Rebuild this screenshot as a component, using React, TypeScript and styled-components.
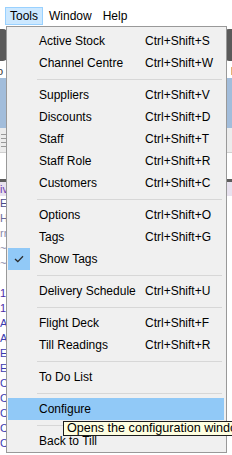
import styled, { createGlobalStyle } from 'styled-components';

const GlobalStyle = createGlobalStyle`
  html, body {
    margin: 0;
    padding: 0;
    background: #ffffff;
  }
  body {
    font-family: 'Liberation Sans', Arial, sans-serif;
    font-size: 12px;
    color: #000000;
  }
`;

const Screen = styled.div`
  position: relative;
  width: 232px;
  height: 455px;
  overflow: hidden;
  background: #ffffff;
  display: flex;
  flex-direction: column;
`;

const MenuBar = styled.div`
  height: 26px;
  flex: none;
  display: flex;
  align-items: flex-end;
  padding: 0 0 1px 5px;
  box-sizing: border-box;
  background: #ffffff;
`;

const BarItem = styled.div<{ $open?: boolean }>`
  height: 18px;
  padding: 0 4px;
  display: flex;
  align-items: center;
  box-sizing: border-box;
  border: 1px solid ${(p) => (p.$open ? '#99d1ff' : 'transparent')};
  background: ${(p) => (p.$open ? '#cce8ff' : 'transparent')};
  margin-right: 1px;
`;

const Toolbar = styled.div`
  height: 52px;
  flex: none;
  display: flex;
  justify-content: space-between;
  padding: 3px 0 0 0;
  box-sizing: border-box;
  margin: 0 -30px;
  background: #ffffff;
`;

const ToolButton = styled.div`
  width: 40px;
  display: flex;
  flex-direction: column;
  align-items: center;
  gap: 4px;
  font-size: 11px;
  color: #333;

  .face {
    width: 36px;
    height: 32px;
    border-radius: 5px;
    background: #5a5a5a;
  }
`;

const BlueBand = styled.div`
  height: 50px;
  flex: none;
  background: #a2bddb;
`;

const GreyBand = styled.div`
  height: 24px;
  flex: none;
  background: #ececec;
  border-bottom: 1px solid #d0d0d0;
  display: flex;
  flex-direction: column;
  justify-content: center;
  gap: 3px;
  padding-left: 1px;

  span {
    width: 5px;
    height: 1px;
    background: #9a9a9a;
  }
`;

const WhiteGap = styled.div`
  height: 26px;
  flex: none;
  background: #ffffff;
`;

const DarkRule = styled.div`
  height: 3px;
  flex: none;
  background: #5c5c5c;
`;

const ListHeader = styled.div`
  height: 14px;
  flex: none;
  background: #e8e2ef;
  color: #6a3ab0;
  font-size: 11px;
  line-height: 14px;
`;

const ListRow = styled.div<{ $tone: string }>`
  height: 15px;
  flex: none;
  font-size: 11px;
  line-height: 15px;
  color: ${(p) => p.$tone};
  white-space: nowrap;
`;

const Dropdown = styled.div`
  position: absolute;
  left: 6px;
  top: 26px;
  width: 221px;
  box-sizing: border-box;
  background: #f0f0f0;
  border: 1px solid #999999;
  padding: 3px 2px 0 1px;
  display: flex;
  flex-direction: column;
`;

const Item = styled.div<{ $hot?: boolean }>`
  height: 22px;
  display: grid;
  grid-template-columns: 22px 9px 106px 1fr;
  align-items: center;
  background: ${(p) => (p.$hot ? '#91c9f7' : 'transparent')};
  color: #000;
  white-space: nowrap;
`;

const CheckBox = styled.div<{ $on?: boolean }>`
  width: 22px;
  height: 22px;
  display: flex;
  align-items: center;
  justify-content: center;
  background: ${(p) => (p.$on ? '#91c9f7' : 'transparent')};
`;

const Label = styled.span`
  grid-column: 3;
`;

const Shortcut = styled.span`
  grid-column: 4;
`;

const Separator = styled.div`
  height: 10px;
  display: flex;
  align-items: center;
  padding: 0 2px 0 29px;

  &::after {
    content: '';
    flex: 1;
    height: 1px;
    background: #d7d7d7;
  }
`;

const Tooltip = styled.div`
  position: absolute;
  left: 63px;
  top: 421px;
  height: 15px;
  box-sizing: border-box;
  border: 1px solid #1e1e1e;
  background: #ffffe1;
  padding: 0 3px;
  font-size: 12.6px;
  line-height: 13px;
  white-space: nowrap;
  color: #000;
`;

type Entry =
  | { kind: 'item'; label: string; keys?: string; checked?: boolean; hot?: boolean }
  | { kind: 'sep' };

const entries: Entry[] = [
  { kind: 'item', label: 'Active Stock', keys: 'Ctrl+Shift+S' },
  { kind: 'item', label: 'Channel Centre', keys: 'Ctrl+Shift+W' },
  { kind: 'sep' },
  { kind: 'item', label: 'Suppliers', keys: 'Ctrl+Shift+V' },
  { kind: 'item', label: 'Discounts', keys: 'Ctrl+Shift+D' },
  { kind: 'item', label: 'Staff', keys: 'Ctrl+Shift+T' },
  { kind: 'item', label: 'Staff Role', keys: 'Ctrl+Shift+R' },
  { kind: 'item', label: 'Customers', keys: 'Ctrl+Shift+C' },
  { kind: 'sep' },
  { kind: 'item', label: 'Options', keys: 'Ctrl+Shift+O' },
  { kind: 'item', label: 'Tags', keys: 'Ctrl+Shift+G' },
  { kind: 'item', label: 'Show Tags', checked: true },
  { kind: 'sep' },
  { kind: 'item', label: 'Delivery Schedule', keys: 'Ctrl+Shift+U' },
  { kind: 'sep' },
  { kind: 'item', label: 'Flight Deck', keys: 'Ctrl+Shift+F' },
  { kind: 'item', label: 'Till Readings', keys: 'Ctrl+Shift+R' },
  { kind: 'sep' },
  { kind: 'item', label: 'To Do List' },
  { kind: 'sep' },
  { kind: 'item', label: 'Configure', hot: true },
  { kind: 'sep' },
  { kind: 'item', label: 'Back to Till' },
];

const rows: [string, string][] = [
  ['Ed', '#4a4a8a'],
  ['Hm', '#6a6a9a'],
  ['rn', '#8a8aa8'],
  ['~a', '#8a8aa8'],
  ['~b', '#8a8aa8'],
  ['  ', '#ffffff'],
  ['1a', '#4b2aa8'],
  ['1b', '#4b2aa8'],
  ['Aa', '#3b3bb0'],
  ['Ab', '#3b3bb0'],
  ['Ea', '#3b3bb0'],
  ['Eb', '#3b3bb0'],
  ['Ca', '#3b3bb0'],
  ['Cb', '#3b3bb0'],
  ['Cc', '#3b3bb0'],
  ['Cd', '#3b3bb0'],
  ['Ce', '#3b3bb0'],
];

function CheckIcon() {
  return (
    <svg width='10' height='8' viewBox='0 0 10 8'>
      <path d='M1 4 L3.8 6.6 L9 1.2' fill='none' stroke='#2b2b2b' strokeWidth='1.3' />
    </svg>
  );
}

function App() {
  return (
    <>
      <GlobalStyle />
      <Screen>
        <MenuBar>
          <BarItem $open>Tools</BarItem>
          <BarItem>Window</BarItem>
          <BarItem>Help</BarItem>
        </MenuBar>
        <Toolbar>
          <ToolButton>
            <div className='face' />
            <span>Repo</span>
          </ToolButton>
          <ToolButton>
            <div className='face' />
            <span>Lists</span>
          </ToolButton>
        </Toolbar>
        <BlueBand />
        <GreyBand>
          <span />
          <span />
          <span />
          <span />
        </GreyBand>
        <WhiteGap />
        <DarkRule />
        <ListHeader>iv</ListHeader>
        {rows.map(([text, tone], i) => (
          <ListRow key={i} $tone={tone}>
            {text}
          </ListRow>
        ))}

        <Dropdown>
          {entries.map((e, i) =>
            e.kind === 'sep' ? (
              <Separator key={i} />
            ) : (
              <Item key={i} $hot={e.hot}>
                <CheckBox $on={e.checked}>{e.checked && <CheckIcon />}</CheckBox>
                <Label>{e.label}</Label>
                {e.keys && <Shortcut>{e.keys}</Shortcut>}
              </Item>
            ),
          )}
        </Dropdown>
        <Tooltip>Opens the configuration window</Tooltip>
      </Screen>
    </>
  );
}

export default App;
